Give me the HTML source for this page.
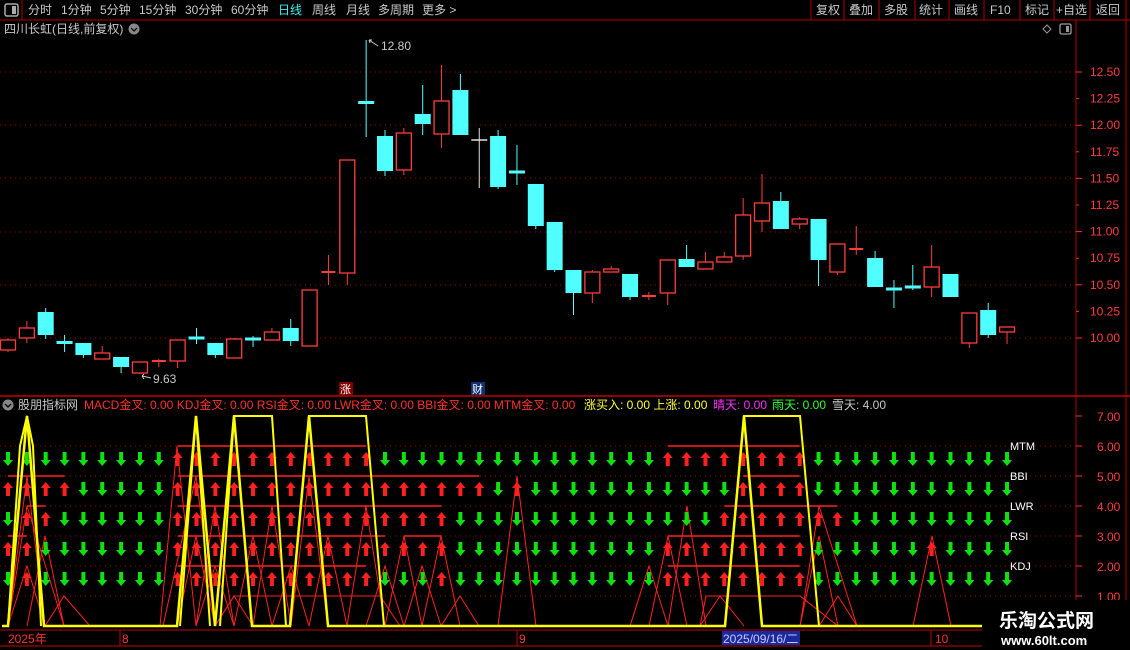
<!DOCTYPE html>
<html><head><meta charset="utf-8">
<style>
html,body{margin:0;padding:0;background:#000;width:1130px;height:650px;overflow:hidden;font-family:"Liberation Sans","Noto Sans CJK SC",sans-serif;}
svg{display:block}
text{font-family:"Liberation Sans","Noto Sans CJK SC",sans-serif;}
</style></head><body>
<svg id="s" width="1130" height="650" xmlns="http://www.w3.org/2000/svg">
<rect width="1130" height="650" fill="#000"/>
<!-- top bar -->
<line x1="0" y1="20" x2="1130" y2="20" stroke="#b00000" stroke-width="1"/>
<line x1="22" y1="0" x2="22" y2="20" stroke="#b00000"/>
<rect x="5" y="4" width="13" height="12" rx="2" fill="none" stroke="#aaa" stroke-width="1.5"/>
<rect x="12" y="6" width="4" height="8" fill="#aaa"/>
<g font-size="12" fill="#c8c8c8">
<text x="28" y="14">分时</text><text x="61" y="14">1分钟</text><text x="100" y="14">5分钟</text><text x="139" y="14">15分钟</text><text x="185" y="14">30分钟</text><text x="231" y="14">60分钟</text>
<text x="278" y="14" fill="#3cf0f0">日线</text><text x="312" y="14">周线</text><text x="346" y="14">月线</text><text x="378" y="14">多周期</text><text x="422" y="14">更多 &gt;</text>
<text x="816" y="14">复权</text><text x="849" y="14">叠加</text><text x="884" y="14">多股</text><text x="919" y="14">统计</text><text x="954" y="14">画线</text><text x="990" y="14">F10</text><text x="1025" y="14">标记</text><text x="1056" y="14">+自选</text><text x="1096" y="14">返回</text>
</g>
<g stroke="#b00000"><line x1="811" y1="0" x2="811" y2="20"/><line x1="844" y1="0" x2="844" y2="20"/><line x1="879" y1="0" x2="879" y2="20"/><line x1="915" y1="0" x2="915" y2="20"/><line x1="949" y1="0" x2="949" y2="20"/><line x1="984" y1="0" x2="984" y2="20"/><line x1="1020" y1="0" x2="1020" y2="20"/><line x1="1054" y1="0" x2="1054" y2="20"/><line x1="1090" y1="0" x2="1090" y2="20"/><line x1="1126" y1="0" x2="1126" y2="650"/><line x1="1076" y1="20" x2="1076" y2="628"/></g>
<!-- header upper -->
<text x="4" y="33" font-size="12" fill="#c8c8c8">四川长虹(日线,前复权)</text>
<circle cx="134" cy="29" r="5.5" fill="#888"/><path d="M131 28 l3 3 l3 -3" stroke="#000" fill="none" stroke-width="1.3"/>
<path d="M1047 25 l4 4 l-4 4 l-4 -4z" fill="none" stroke="#999"/>
<rect x="1060" y="24" width="11" height="10" rx="1.5" fill="none" stroke="#999" stroke-width="1.3"/><rect x="1066" y="26" width="3" height="6" fill="#999"/>
<!-- divider -->
<line x1="0" y1="396" x2="1130" y2="396" stroke="#c00000" stroke-width="1.5"/>
<g id="g"></g>
<!-- lower header -->
<circle cx="8" cy="405" r="5.5" fill="#888"/><path d="M5 404 l3 3 l3 -3" stroke="#000" fill="none" stroke-width="1.3"/>
<text y="409" font-size="12">
<tspan x="18" fill="#c8c8c8">股朋指标网</tspan>
<tspan x="84" fill="#ff3030">MACD金叉: 0.00  KDJ金叉: 0.00  RSI金叉: 0.00  LWR金叉: 0.00  BBI金叉: 0.00  MTM金叉: 0.00</tspan>
<tspan x="584" fill="#ffff30">涨买入: 0.00  上涨: 0.00</tspan>
<tspan x="713" fill="#ff30ff">晴天: 0.00</tspan>
<tspan x="772" fill="#30ff30">雨天: 0.00</tspan>
<tspan x="832" fill="#c8c8c8">雪天: 4.00</tspan>
</text>
<!-- markers -->
<rect x="339" y="382" width="14" height="13" fill="#800000"/><text x="340" y="393" font-size="11" fill="#fff">涨</text>
<rect x="471" y="382" width="14" height="13" fill="#103070"/><text x="472" y="393" font-size="11" fill="#fff">财</text>
<text x="381" y="50" font-size="12" fill="#c8c8c8">12.80</text><path d="M378 46 l-9 -6 m0 0 l3 0 m-3 0 l1 3" stroke="#c8c8c8" fill="none"/>
<text x="153" y="383" font-size="12" fill="#c8c8c8">9.63</text><path d="M151 378 l-9 -2 m0 0 l2 -2 m-2 2 l2 3" stroke="#c8c8c8" fill="none"/>
<!-- date bar -->
<line x1="0" y1="630" x2="1126" y2="630" stroke="#c00000"/>
<line x1="0" y1="646" x2="1126" y2="646" stroke="#c00000"/>
<g stroke="#c00000"><line x1="120" y1="630" x2="120" y2="646"/><line x1="517" y1="630" x2="517" y2="646"/><line x1="931" y1="630" x2="931" y2="646"/></g>
<g font-size="12" fill="#ff3030"><text x="8" y="643">2025年</text><text x="122" y="643">8</text><text x="519" y="643">9</text><text x="935" y="643">10</text></g>
<rect x="722" y="631" width="78" height="14" fill="#1a2a9a"/><text x="723" y="643" font-size="12" fill="#c8c8ff">2025/09/16/二</text>
<!-- watermark -->
<rect x="982" y="600" width="148" height="50" fill="#000"/>
<text x="999" y="627" font-size="19" font-weight="bold" fill="#fff" font-family="Liberation Serif,Noto Serif CJK SC,serif">乐淘公式网</text>
<text x="1001" y="645" font-size="13" font-weight="bold" fill="#fff" font-family="Liberation Serif,serif">www.60lt.com</text>
</svg>
<script>
var g=document.getElementById('g'),h='';
function L(x1,y1,x2,y2,c,w,d){h+='<line x1="'+x1+'" y1="'+y1+'" x2="'+x2+'" y2="'+y2+'" stroke="'+c+'" stroke-width="'+(w||1)+'"'+(d?' stroke-dasharray="'+d+'"':'')+'/>';}
// dotted grid upper
[72,125,178,232,285,338].forEach(function(y){L(0,y,1076,y,'#a00000',1,'1 4');});
// price axis
var pr=['12.50','12.25','12.00','11.75','11.50','11.25','11.00','10.75','10.50','10.25','10.00'];
pr.forEach(function(p,i){var y=72+i*26.6;L(1076,y,(i%2?1079:1082),y,'#ff3030');h+='<text x="1090" y="'+(y+4)+'" font-size="12" fill="#ff3c3c">'+p+'</text>';});
// lower grid & axis
for(var v=1;v<=7;v++){var y=626-v*30;if(v<7)L(0,y,1076,y,'#a00000',1,'1 4');L(1076,y,1082,y,'#ff3030');h+='<text x="1097" y="'+(y+5)+'" font-size="12" fill="#ff3c3c">'+v+'.00</text>';}
// candles: x,top,bot,hi,lo,type
var C=[[340,350,338,352,'r'],[328,338,321,343,'r'],[312,335,308,339,'c'],[341,344,335,352,'c'],[343,355,343,358,'c'],[353,359,346,359,'r'],[357,367,357,373,'c'],[362,373,362,374,'r'],[361,362,359,367,'r'],[340,361,340,368,'r'],[337,339,328,344,'c'],[343,355,343,358,'c'],[339,358,338,358,'r'],[338,340,336,347,'c'],[332,340,328,340,'r'],[328,341,319,346,'c'],[290,346,290,346,'r'],[272,274,255,285,'r'],[160,273,160,285,'r'],[101,104,40,137,'c'],[136,171,130,176,'c'],[133,170,128,175,'r'],[114,124,85,135,'c'],[101,134,65,148,'r'],[90,135,74,135,'c'],[139,141,128,188,'w'],[136,187,130,189,'c'],[171,173,145,185,'c'],[184,226,184,229,'c'],[222,270,222,272,'c'],[270,293,270,315,'c'],[272,293,270,303,'r'],[269,272,266,272,'r'],[274,297,274,300,'c'],[296,297,292,300,'r'],[260,293,260,305,'r'],[259,267,245,267,'c'],[262,269,252,269,'r'],[257,262,252,262,'r'],[215,256,198,260,'r'],[203,221,174,232,'r'],[201,229,192,229,'c'],[219,224,217,229,'r'],[219,260,219,286,'c'],[244,272,244,275,'r'],[249,251,226,255,'r'],[258,287,251,287,'c'],[288,290,280,308,'c'],[286,288,265,290,'c'],[267,287,245,297,'r'],[274,297,274,297,'c'],[313,343,313,348,'r'],[310,335,303,338,'c'],[327,332,327,344,'r']];
function X(i){return 8+i*18.85;}
C.forEach(function(c,i){var x=X(i),t=c[0],b=c[1],col=c[4]=='r'?'#ff3c3c':'#50ffff';if(c[4]=='w')col='#e0e0e0';
L(x,c[2],x,c[3],col);
if(c[4]=='r'){if(b-t<3)L(x-7,t,x+7,t,col,2);else h+='<rect x="'+(x-7.5)+'" y="'+t+'" width="15" height="'+(b-t)+'" fill="#000" stroke="'+col+'" stroke-width="1.3"/>';}
else{if(b-t<3)L(x-8,t+1,x+8,t+1,col,(c[4]=='w'?1.5:3));else h+='<rect x="'+(x-8)+'" y="'+t+'" width="16" height="'+(b-t)+'" fill="'+col+'"/>';}
});
// lower rows: red ranges
var R=[[[9,19],[35,42]],[[0,3],[9,25],[27,27],[39,42]],[[1,2],[9,23],[38,44]],[[0,1],[9,20],[21,23],[35,42],[49,49]],[[1,1],[9,19],[23,23],[35,42]]];
// thin red zigzags
var Z=[[8,27,45,476],[8,27,64,506],[27,45,64,536],[8,27,45,566],[45,64,90,596],[160,177,196,446],[163,196,215,476],[177,196,215,536],[196,215,234,506],[196,215,234,566],[215,234,253,596],[234,253,272,536],[253,272,291,506],[272,291,309,566],[291,309,328,476],[309,328,347,536],[347,366,385,506],[366,385,404,566],[385,404,422,536],[404,422,441,566],[422,441,460,536],[441,460,479,596],[498,517,536,476],[630,649,668,566],[649,668,687,536],[668,687,706,506],[700,720,744,596],[800,819,838,536],[800,819,857,506],[819,838,857,596],[913,932,951,536]];
Z.forEach(function(z){h+='<polyline points="'+z[0]+',626 '+z[1]+','+z[3]+' '+z[2]+',626" fill="none" stroke="#ff2020" stroke-width="1"/>';});
h+='<polyline points="700,626 706,596 800,596 838,626" fill="none" stroke="#ff2020"/>';
h+='<polyline points="215,626 234,596 380,596 400,626" fill="none" stroke="#ff2020"/>';
R.forEach(function(rs,k){var ly=446+k*30,ay=452+k*30;
rs.forEach(function(r){L(X(r[0]),ly,X(r[1]),ly,'#ff2020',1.5);});
for(var i=0;i<54;i++){var x=X(i),red=rs.some(function(r){return i>=r[0]&&i<=r[1];});
if(red)h+='<path d="M'+x+' '+ay+' l5 6 h-3 v8 h-4 v-8 h-3z" fill="#ff2020"/>';
else h+='<path d="M'+(x-2)+' '+ay+' h4 v8 h3 l-5 6 l-5 -6 h3z" fill="#10e010"/>';}
});
['MTM','BBI','LWR','RSI','KDJ'].forEach(function(t,k){h+='<text x="1010" y="'+(450+k*30)+'" font-size="11" fill="#fff">'+t+'</text>';});
// yellow
h+='<polyline points="2,626 8,626 27,416 44,626 177,626 196,416 215,626 234,416 252,626 290,626 309,416 328,626 384,626 725,626 744,416 762,626 813,626 1076,626" fill="none" stroke="#ffff00" stroke-width="2.5"/>';
h+='<polyline points="8,626 20,446 27,416 33,446 41,626" fill="none" stroke="#ffff00" stroke-width="2"/>';
h+='<polyline points="220,626 234,416 272,416 286,626" fill="none" stroke="#ffff00" stroke-width="2"/>';
h+='<polyline points="290,626 309,416 366,416 384,626" fill="none" stroke="#ffff00" stroke-width="2"/>';
h+='<polyline points="725,626 744,416 800,416 819,626" fill="none" stroke="#ffff00" stroke-width="2"/>';
h+='<polyline points="180,626 196,416 210,626" fill="none" stroke="#ffff00" stroke-width="2"/>';
g.innerHTML=h;
</script>
</body></html>
